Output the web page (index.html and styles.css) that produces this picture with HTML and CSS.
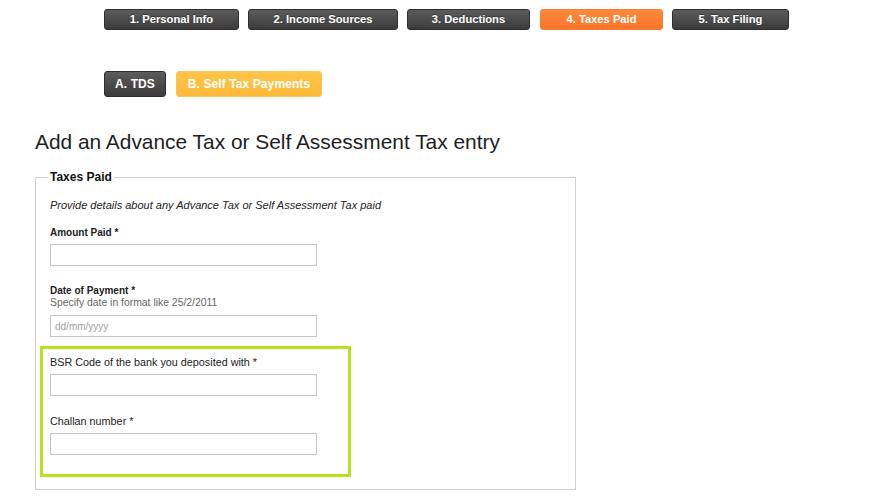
FILE: index.html
```html
<!DOCTYPE html>
<html>
<head>
<meta charset="utf-8">
<link rel="stylesheet" href="styles.css">
</head>
<body>
<div class="page">
  <nav class="steps">
    <a class="btn dark">1. Personal Info</a>
    <a class="btn dark">2. Income Sources</a>
    <a class="btn dark">3. Deductions</a>
    <a class="btn orange">4. Taxes Paid</a>
    <a class="btn dark">5. Tax Filing</a>
  </nav>
  <nav class="substeps">
    <a class="sbtn dark">A. TDS</a>
    <a class="sbtn yellow">B. Self Tax Payments</a>
  </nav>
  <h1 class="title">Add an Advance Tax or Self Assessment Tax entry</h1>
  <fieldset class="box">
    <legend class="legend">Taxes Paid</legend>
    <p class="intro">Provide details about any Advance Tax or Self Assessment Tax paid</p>
    <div class="field">
      <label class="label">Amount Paid *</label>
      <input class="input" type="text">
    </div>
    <div class="field second">
      <label class="label">Date of Payment *</label>
      <div class="hint">Specify date in format like 25/2/2011</div>
      <input class="input" type="text" placeholder="dd/mm/yyyy">
    </div>
    <div class="highlight">
      <div class="field first">
        <label class="label plain">BSR Code of the bank you deposited with *</label>
        <input class="input" type="text">
      </div>
      <div class="field">
        <label class="label plain">Challan number *</label>
        <input class="input" type="text">
      </div>
    </div>
  </fieldset>
</div>
</body>
</html>
```
FILE: styles.css
```css
* { box-sizing: border-box; }
html, body { margin: 0; padding: 0; background: #fff; }
body { font-family: "Liberation Sans", Arial, sans-serif; color: #222; }
.page { padding: 9px 0 0 35px; width: 872px; height: 500px; overflow: hidden; }

.steps { display: flex; gap: 9px; margin-left: 69px; }
.btn {
  display: block; height: 21px; line-height: 19px; padding: 0;
  font-size: 11.2px; font-weight: bold; color: #fff; text-align: center;
  white-space: nowrap;
  border-radius: 3px; border: 1px solid #2b2b2b;
  text-shadow: 0 -1px 0 rgba(0,0,0,.35);
}
.btn:nth-child(1) { width: 135px; }
.btn:nth-child(2) { width: 150px; }
.btn:nth-child(3) { width: 123px; }
.btn:nth-child(4) { width: 123px; margin-left: 1px; }
.btn:nth-child(5) { width: 117px; }
.dark { background: linear-gradient(#5c5c5c, #3b3b3b); border-color: #2e2e2e; }
.orange { background: linear-gradient(#ff8a3d, #fb7428); border-color: #f57a33; text-shadow: none; }

.substeps { display: flex; gap: 10px; margin: 41px 0 0 69px; }
.sbtn {
  display: block; height: 26px; line-height: 24px; padding: 0;
  font-size: 12px; font-weight: bold; color: #fff; border-radius: 3px;
  border: 1px solid #2e2e2e; letter-spacing: 0.1px; white-space: nowrap;
  text-align: center;
}
.sbtn.dark { width: 62px; }
.yellow { background: linear-gradient(#ffc548, #fdb93a); border-color: #f9c35a; width: 146px; }

.title { font-size: 20.9px; font-weight: normal; margin: 33px 0 0 0; line-height: 24px; color: #1e1e1e; }

.box {
  margin: 16px 0 0 0; width: 541px; height: 320px;
  border: 1px solid #cfcfcf; padding: 3px 14px 0 14px;
}
.legend { font-size: 12px; font-weight: bold; padding: 0 2px; margin-left: -2px; color: #111; }
.intro { margin: 12px 0 0 0; font-size: 11px; font-style: italic; line-height: 13px; color: #222; }
.field { margin-top: 14px; }
.field.second { margin-top: 18px; }
.label { display: block; font-size: 10px; font-weight: bold; line-height: 13px; color: #222; }
.label.plain { font-weight: normal; font-size: 10.8px; }
.hint { font-size: 10.4px; line-height: 12px; color: #666; }
.input {
  display: block; margin-top: 5px; width: 267px; height: 22px;
  border: 1px solid #c4c4c4; background: #fff; padding: 0 4px;
  font-family: "Liberation Sans", Arial, sans-serif; font-size: 10px;
}
.field.second .input { margin-top: 6px; }
.input::placeholder { color: #a0a0a0; }
.highlight {
  margin: 9px 0 0 -10px; width: 311px; height: 131px;
  border: 3px solid #b5e41e; padding: 0 0 0 7px;
}
.highlight .field.first { margin-top: 7px; }
.highlight .field { margin-top: 19px; }
```
